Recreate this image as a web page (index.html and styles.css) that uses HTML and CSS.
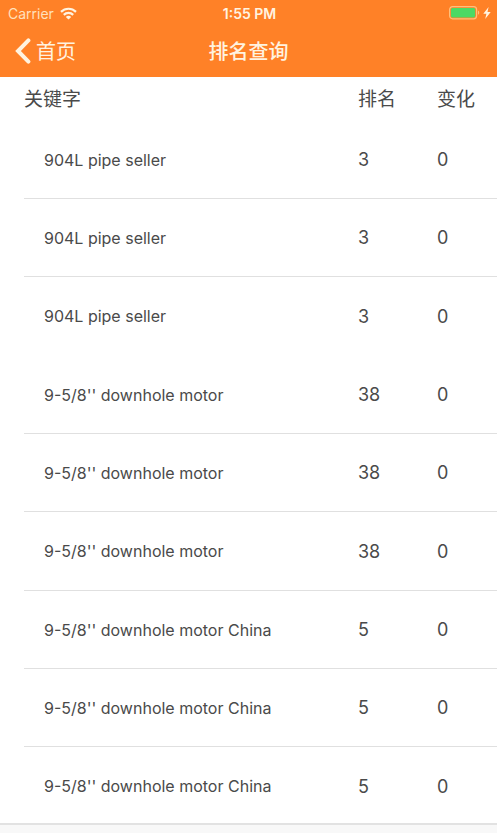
FILE: index.html
```
<!DOCTYPE html>
<html lang="zh-CN">
<head>
  <meta charset="UTF-8">
  <meta name="viewport" content="width=device-width, initial-scale=1.0">
  <title>排名查询</title>
  <link rel="stylesheet" href="styles.css">
</head>
<body>
  <header class="header">
    <div class="status-bar">
      <div class="carrier">
        <span>Carrier</span>
        <svg class="wifi" viewBox="0 0 17 13" width="17" height="13" fill="none" stroke="currentColor" stroke-width="2.2">
          <path d="M1 4.9C5.2 0.7 11.8 0.7 16 4.9"/>
          <path d="M3.8 7.9C6.4 5.3 10.6 5.3 13.2 7.9"/>
          <path d="M8.5 12.6L5.8 9.9C7.3 8.5 9.7 8.5 11.2 9.9Z" fill="currentColor" stroke="none"/>
        </svg>
      </div>
      <div class="time">1:55 PM</div>
      <div class="battery">
        <svg viewBox="0 0 32 14" width="32" height="14">
          <rect x="0.6" y="0.6" width="27" height="12.2" rx="3" fill="none" stroke="#ffc07c" stroke-width="1.2"/>
          <rect x="2" y="2" width="24.2" height="9.4" rx="1.6" fill="#4cd964"/>
          <path d="M29 4.6C30.7 5.2 30.7 8.2 29 8.8Z" fill="#ffc07c"/>
        </svg>
        <svg viewBox="0 0 8 12" width="8" height="12">
          <path d="M5.6 0L0.3 6.8H3.4L2.2 12L7.7 4.9H4.5Z" fill="#fff3e0"/>
        </svg>
      </div>
    </div>
    <nav class="nav-bar">
      <a class="back" href="#">
        <svg viewBox="0 0 16 26" width="16" height="26" fill="none" stroke="currentColor" stroke-width="4" stroke-linecap="round">
          <path d="M13.4 2.4L3 13L13.4 23.6"/>
        </svg>
        <span>首页</span>
      </a>
      <h1>排名查询</h1>
    </nav>
  </header>

  <main class="content">
    <table class="rank-table">
      <thead>
        <tr><th class="keyword">关键字</th><th class="rank">排名</th><th class="change">变化</th></tr>
      </thead>
      <tbody class="open">
        <tr><td>904L pipe seller</td><td>3</td><td>0</td></tr>
        <tr><td>904L pipe seller</td><td>3</td><td>0</td></tr>
        <tr><td>904L pipe seller</td><td>3</td><td>0</td></tr>
      </tbody>
      <tbody>
        <tr><td>9-5/8'' downhole motor</td><td>38</td><td>0</td></tr>
        <tr><td>9-5/8'' downhole motor</td><td>38</td><td>0</td></tr>
        <tr><td>9-5/8'' downhole motor</td><td>38</td><td>0</td></tr>
      </tbody>
      <tbody>
        <tr><td>9-5/8'' downhole motor China</td><td>5</td><td>0</td></tr>
        <tr><td>9-5/8'' downhole motor China</td><td>5</td><td>0</td></tr>
        <tr><td>9-5/8'' downhole motor China</td><td>5</td><td>0</td></tr>
      </tbody>
    </table>
  </main>

  <footer class="tab-bar"></footer>
</body>
</html>
```
FILE: styles.css
```
* {
  box-sizing: border-box;
}
html {
  scrollbar-width: none;
}
body {
  margin: 0;
  background-color: #fff;
  color: #4a4a4a;
  font-family: Inter, "Noto Sans CJK SC", sans-serif;
}
.header {
  background-color: #ff8127;
  color: #fff3e0;
}
.status-bar {
  display: grid;
  grid-template-columns: 1fr auto 1fr;
  align-items: center;
  height: 26px;
  padding: 0 6px 0 8px;
  font-size: 14px;
}
.carrier {
  display: flex;
  align-items: center;
  gap: 6px;
  color: #ffe0bd;
}
.wifi {
  color: #fff3e0;
}
.time {
  font-weight: 600;
}
.battery {
  display: flex;
  align-items: center;
  justify-content: flex-end;
  gap: 2px;
}
.nav-bar {
  display: grid;
  grid-template-columns: 1fr auto 1fr;
  align-items: center;
  height: 51px;
  padding: 0 15px 2px;
}
.back {
  display: flex;
  align-items: center;
  gap: 5px;
  color: #fff3e0;
  font-size: 20px;
  text-decoration: none;
}
h1 {
  margin: 0;
  font-size: 20px;
  font-weight: 500;
}
.content {
  padding-left: 24px;
}
.rank-table {
  width: 100%;
  table-layout: fixed;
  border-spacing: 0;
}
th {
  height: 44px;
  padding: 0 0 4px;
  font-size: 19px;
  font-weight: 400;
  text-align: left;
}
.rank {
  width: 79px;
}
.change {
  width: 60px;
}
td {
  height: 78px;
  padding: 0;
  border-bottom: 1px solid #e0e0e0;
  font-size: 18px;
}
td:first-child {
  padding-left: 20px;
  font-size: 16px;
}
tr:last-child td {
  height: 79px;
}
.open tr:last-child td {
  border-bottom-color: transparent;
}
.tab-bar {
  position: fixed;
  right: 0;
  bottom: 0;
  left: 0;
  height: 10px;
  border-top: 2px solid #e2e2e2;
  background-color: #f8f8f8;
}
```
